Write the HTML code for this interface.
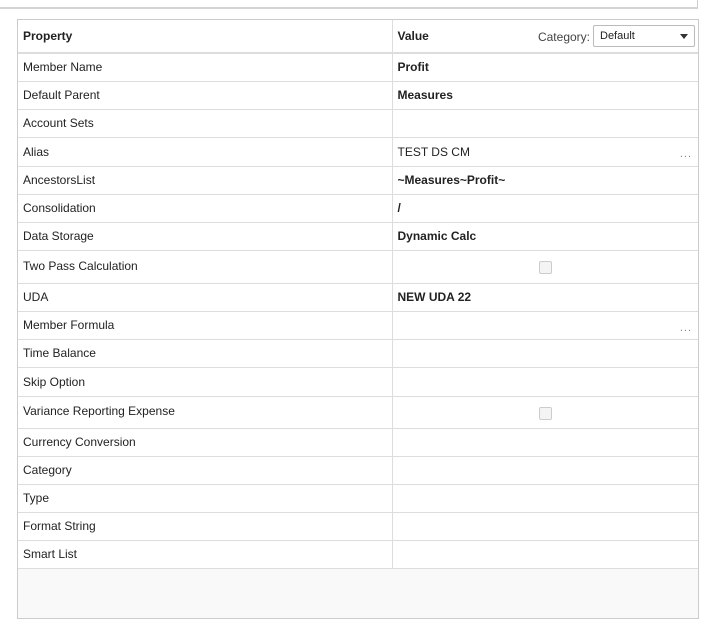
<!DOCTYPE html>
<html><head><style>
body{margin:0;width:704px;height:621px;background:#fff;font-family:"Liberation Sans",sans-serif;font-size:12px;color:#222;position:relative;overflow:hidden}
.top{position:absolute;left:0;top:0;width:697px;height:7px;border-right:1px solid #ccc;border-bottom:2px solid #d4d4d4;background:#fff}
.panel{position:absolute;left:17px;top:19px;width:680px;height:598px;border:1px solid #ccc;background:#f9f9f9}
table{border-collapse:collapse;width:680px;table-layout:fixed;background:#fff}
td{border-bottom:1px solid #ddd;padding:0 0 0 5px;vertical-align:middle;white-space:nowrap;position:relative}
td:first-child{border-right:1px solid #ddd}
th{font-weight:bold;text-align:left;padding:0 0 0 5px;height:32px;border-bottom:2px solid #ddd;position:relative}
th:first-child{border-right:1px solid #ddd}
b{font-weight:bold}
.dots{position:absolute;right:6px;top:10px;color:#5a8fc7;font-size:11px;letter-spacing:1px}
.cb{position:absolute;left:146px;width:11px;height:11px;border:1px solid #ccc;border-radius:2px;background:#f4f4f4;top:10px}
.sel{position:absolute;right:3px;top:5px;width:102px;height:22px;border:1px solid #bbb;border-radius:2px;background:#fff;font-weight:normal;font-size:11px;line-height:21px;box-sizing:border-box;padding-left:6px}
.sel:after{content:"";position:absolute;right:6px;top:8px;border-left:4px solid transparent;border-right:4px solid transparent;border-top:5px solid #333}
.cat{position:absolute;right:108px;top:10px;font-weight:normal;color:#444}
</style></head><body>
<div class="top"></div>
<div class="panel">
<table>
<colgroup><col style="width:374px"><col style="width:306px"></colgroup>
<tr><th>Property</th><th>Value<span class="cat">Category:</span><div class="sel">Default</div></th></tr>
<tr style="height:28px"><td>Member Name</td><td><b>Profit</b></td></tr>
<tr style="height:28px"><td>Default Parent</td><td><b>Measures</b></td></tr>
<tr style="height:28px"><td>Account Sets</td><td></td></tr>
<tr style="height:29px"><td>Alias</td><td>TEST DS CM<span class="dots">...</span></td></tr>
<tr style="height:28px"><td>AncestorsList</td><td><b>~Measures~Profit~</b></td></tr>
<tr style="height:28px"><td>Consolidation</td><td><b>/</b></td></tr>
<tr style="height:28px"><td>Data Storage</td><td><b>Dynamic Calc</b></td></tr>
<tr style="height:33px"><td style="vertical-align:top;padding-top:8px">Two Pass Calculation</td><td><div class="cb"></div></td></tr>
<tr style="height:28px"><td>UDA</td><td><b>NEW UDA 22</b></td></tr>
<tr style="height:28px"><td>Member Formula</td><td><span class="dots">...</span></td></tr>
<tr style="height:28px"><td>Time Balance</td><td></td></tr>
<tr style="height:29px"><td>Skip Option</td><td></td></tr>
<tr style="height:32px"><td style="vertical-align:top;padding-top:7px">Variance Reporting Expense</td><td><div class="cb"></div></td></tr>
<tr style="height:28px"><td>Currency Conversion</td><td></td></tr>
<tr style="height:28px"><td>Category</td><td></td></tr>
<tr style="height:28px"><td>Type</td><td></td></tr>
<tr style="height:28px"><td>Format String</td><td></td></tr>
<tr style="height:28px"><td>Smart List</td><td></td></tr>
</table>
</div>
</body></html>
